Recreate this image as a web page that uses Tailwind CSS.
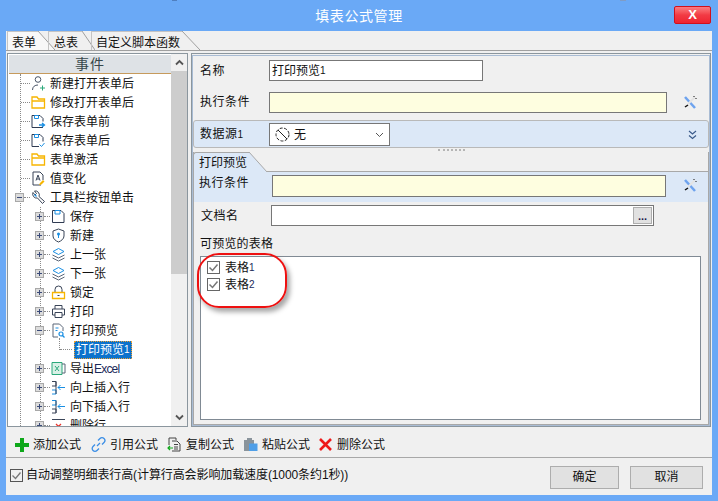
<!DOCTYPE html>
<html>
<head>
<meta charset="utf-8">
<script src="https://cdn.jsdelivr.net/npm/@tailwindcss/browser@4"></script>
</head>
<body class="m-0">
<div class="w-[718px] h-[501px] overflow-hidden bg-[#6aa9f6] flex flex-col font-['Liberation_Sans','Noto_Sans_CJK_SC',sans-serif] text-[12px] leading-[16px] text-[#111]">
  <!-- title -->
  <div class="h-[31px] shrink-0 relative flex items-center justify-center">
    <span class="text-white text-[14px] tracking-[0.6px] mt-[1px]">填表公式管理</span>
    <div class="absolute left-[172px] top-0 w-[5px] h-[1px] bg-[#4f7fc0]"></div>
    <div class="absolute left-[620px] top-0 w-[6px] h-[1px] bg-[#7f9cc6]"></div>
    <div class="absolute left-[674px] top-[6px] w-[37px] h-[18px] rounded-[2px] border border-[#d0101c] bg-gradient-to-b from-[#fb7a80] via-[#f23a44] to-[#ee2330] flex items-center justify-center text-white font-bold text-[13px] font-['Liberation_Sans',sans-serif]">X</div>
  </div>
  <!-- window body -->
  <div class="mx-[6px] mb-[6px] flex-1 bg-[#f0f0f0] flex flex-col min-h-0">
    <!-- tabs -->
    <div class="h-[20px] shrink-0 flex items-stretch border-b border-[#a0a0a0] pl-[1px]">
      <div class="relative w-[31px] bg-[#f8f8f8] border-t border-l border-[#c4c4c4] pl-[4px] pt-[3px] whitespace-nowrap">表单</div>
      <svg class="w-[17px] h-[19px] shrink-0" viewBox="0 0 17 19"><path d="M0 0L17 19H0Z" fill="#f8f8f8"/><path d="M0 0L17 19" stroke="#a0a0a0" fill="none"/></svg>
      <div class="w-[34px] -ml-[7px] border-t border-l border-[#c4c4c4] pl-[5px] pt-[3px] relative whitespace-nowrap">总表</div>
      <svg class="w-[13px] h-[19px] shrink-0" viewBox="0 0 13 19"><path d="M0 0L13 19" stroke="#a0a0a0" fill="none"/></svg>
      <div class="w-[91px] -ml-[4px] border-t border-l border-[#c4c4c4] pl-[4px] pt-[3px] whitespace-nowrap">自定义脚本函数</div>
      <svg class="w-[18px] h-[19px] shrink-0" viewBox="0 0 18 19"><path d="M0 0L18 19" stroke="#a0a0a0" fill="none"/></svg>
    </div>
    <!-- panels -->
    <div class="flex h-[376px] shrink-0 pt-[2px] pl-[1px] pr-[1px] gap-[3px]">
      <!-- left -->
      <div class="w-[181px] shrink-0 border border-[#8b969e] flex bg-white">
        <div class="w-[163px] shrink-0 flex flex-col min-h-0 pl-[1px] pt-[1px]">
          <div class="h-[19px] shrink-0 bg-[#dee2e6] border-b border-[#c69a5c] text-center text-[14px] text-[#37474a] tracking-[1px] leading-[19px]">事件</div>
          <div class="relative flex-1 overflow-hidden -ml-[1px]">
            <div class="absolute left-[12px] top-0 bottom-0 border-l border-dotted border-[#8a8a8a]"></div>
            <div class="absolute left-[32px] top-[133px] bottom-0 border-l border-dotted border-[#8a8a8a]"></div>
            <div class="absolute left-[51px] top-[264px] h-[12px] border-l border-dotted border-[#8a8a8a]"></div>

            <div class="relative h-[19px] flex items-center pl-[13px]"><span class="w-[9px] border-t border-dotted border-[#8a8a8a]"></span>
              <svg class="w-[15px] h-[15px] ml-[1px]" viewBox="0 0 15 15" fill="none"><circle cx="7" cy="3.500" r="2.800" stroke="#4a5568"/><path d="M1.500 14c0-3.500 2.500-5 5.500-5" stroke="#4a5568"/><path d="M11.500 9.500v5M9 12h5" stroke="#2aa87a"/></svg>
              <span class="ml-[4px]">新建打开表单后</span></div>
            <div class="relative h-[19px] flex items-center pl-[13px]"><span class="w-[9px] border-t border-dotted border-[#8a8a8a]"></span>
              <svg class="w-[15px] h-[15px] ml-[1px]" viewBox="0 0 15 15" fill="none"><path d="M1 13V2h5l1.500 2H13.500V13Z M1 6h12.500" stroke="#f7b500" stroke-width="1.300"/></svg>
              <span class="ml-[4px]">修改打开表单后</span></div>
            <div class="relative h-[19px] flex items-center pl-[13px]"><span class="w-[9px] border-t border-dotted border-[#8a8a8a]"></span>
              <svg class="w-[15px] h-[15px] ml-[1px]" viewBox="0 0 15 15" fill="none"><path d="M1 1.500h8l3 3v3M12 13.500H1v-12" stroke="#2f3b52"/><path d="M3.500 1.500h4v3h-4Z" stroke="#1a8fe3"/><path d="M8 11h5M11 9l2.500 2-2.500 2" stroke="#1a8fe3" stroke-width="1.300"/></svg>
              <span class="ml-[4px]">保存表单前</span></div>
            <div class="relative h-[19px] flex items-center pl-[13px]"><span class="w-[9px] border-t border-dotted border-[#8a8a8a]"></span>
              <svg class="w-[15px] h-[15px] ml-[1px]" viewBox="0 0 15 15" fill="none"><path d="M1 1.500h8l3 3v4M8 13.500H1v-12" stroke="#2f3b52"/><path d="M3.500 1.500h4v3h-4Z" stroke="#1a8fe3"/><path d="M8.500 11.500l2 2 3-3.500" stroke="#1a8fe3"/></svg>
              <span class="ml-[4px]">保存表单后</span></div>
            <div class="relative h-[19px] flex items-center pl-[13px]"><span class="w-[9px] border-t border-dotted border-[#8a8a8a]"></span>
              <svg class="w-[15px] h-[15px] ml-[1px]" viewBox="0 0 15 15" fill="none"><path d="M1 13V2h5l1.500 2H13.500V13Z M1 6h12.500" stroke="#f7b500" stroke-width="1.300"/></svg>
              <span class="ml-[4px]">表单激活</span></div>
            <div class="relative h-[19px] flex items-center pl-[13px]"><span class="w-[9px] border-t border-dotted border-[#8a8a8a]"></span>
              <svg class="w-[15px] h-[15px] ml-[1px]" viewBox="0 0 15 15" fill="none"><path d="M10 14H2V1h7l3 3v5" stroke="#3a4558"/><path d="M5 9.500L7 4l2 5.500M5.700 8h2.600" stroke="#3a4558"/><path d="M8 14l1-2 3-3 1.500 1.500-3 3Z" fill="#f7b500"/></svg>
              <span class="ml-[4px]">值变化</span></div>
            <!-- toolbar click -->
            <div class="relative h-[19px] flex items-center pl-[7px]">
              <span class="w-[9px] h-[9px] bg-[#dcdcdc] border border-[#a8a8a8] flex items-center justify-center"><span class="w-[5px] h-[1px] bg-[#3a4a78]"></span></span>
              <span class="w-[6px] border-t border-dotted border-[#8a8a8a]"></span>
              <svg class="w-[15px] h-[15px] ml-[1px]" viewBox="0 0 15 15" fill="none"><path d="M2 2.500a4 4 0 0 0 4.500 5.500l5 5.500 2-2-5.500-5A4 4 0 0 0 3.500 1l2 2.500L4 5Z" stroke="#3a4558"/><path d="M3.500 4.500l2 2" stroke="#1a8fe3" stroke-width="1.200"/></svg>
              <span class="ml-[4px]">工具栏按钮单击</span></div>
            <!-- level 1 -->
            <div class="relative h-[19px] flex items-center pl-[27px]">
              <span class="w-[9px] h-[9px] bg-[#dcdcdc] border border-[#a8a8a8] relative flex items-center justify-center"><span class="w-[5px] h-[1px] bg-[#3a4a78]"></span><span class="absolute w-[1px] h-[5px] bg-[#3a4a78]"></span></span>
              <span class="w-[6px] border-t border-dotted border-[#8a8a8a]"></span>
              <svg class="w-[15px] h-[15px] ml-[1px]" viewBox="0 0 15 15" fill="none"><path d="M1.500 1.500h8.500l3 3v9h-11.500Z" stroke="#2f3b52"/><path d="M4 1.500h5v3.500h-5Z" stroke="#1a8fe3"/></svg>
              <span class="ml-[4px]">保存</span></div>
            <div class="relative h-[19px] flex items-center pl-[27px]">
              <span class="w-[9px] h-[9px] bg-[#dcdcdc] border border-[#a8a8a8] relative flex items-center justify-center"><span class="w-[5px] h-[1px] bg-[#3a4a78]"></span><span class="absolute w-[1px] h-[5px] bg-[#3a4a78]"></span></span>
              <span class="w-[6px] border-t border-dotted border-[#8a8a8a]"></span>
              <svg class="w-[15px] h-[15px] ml-[1px]" viewBox="0 0 15 15" fill="none"><path d="M7.500 1L13 3v5c0 3-3 5-5.500 6C5 13 2 11 2 8V3Z" stroke="#3a4558"/><circle cx="7.500" cy="6" r="1.500" fill="#1a8fe3"/><path d="M7.500 7v3" stroke="#1a8fe3"/></svg>
              <span class="ml-[4px]">新建</span></div>
            <div class="relative h-[19px] flex items-center pl-[27px]">
              <span class="w-[9px] h-[9px] bg-[#dcdcdc] border border-[#a8a8a8] relative flex items-center justify-center"><span class="w-[5px] h-[1px] bg-[#3a4a78]"></span><span class="absolute w-[1px] h-[5px] bg-[#3a4a78]"></span></span>
              <span class="w-[6px] border-t border-dotted border-[#8a8a8a]"></span>
              <svg class="w-[15px] h-[15px] ml-[1px]" viewBox="0 0 15 15" fill="none"><path d="M7.500 1.500l5.500 3-5.500 3-5.500-3Z" stroke="#1a8fe3"/><path d="M1.500 8l6 3 6-3M1.500 11l6 3 6-3" stroke="#5a6678"/></svg>
              <span class="ml-[4px]">上一张</span></div>
            <div class="relative h-[19px] flex items-center pl-[27px]">
              <span class="w-[9px] h-[9px] bg-[#dcdcdc] border border-[#a8a8a8] relative flex items-center justify-center"><span class="w-[5px] h-[1px] bg-[#3a4a78]"></span><span class="absolute w-[1px] h-[5px] bg-[#3a4a78]"></span></span>
              <span class="w-[6px] border-t border-dotted border-[#8a8a8a]"></span>
              <svg class="w-[15px] h-[15px] ml-[1px]" viewBox="0 0 15 15" fill="none"><path d="M7.500 1.500l5.500 3-5.500 3-5.500-3Z" stroke="#1a8fe3"/><path d="M1.500 8l6 3 6-3M1.500 11l6 3 6-3" stroke="#5a6678"/></svg>
              <span class="ml-[4px]">下一张</span></div>
            <div class="relative h-[19px] flex items-center pl-[27px]">
              <span class="w-[9px] h-[9px] bg-[#dcdcdc] border border-[#a8a8a8] relative flex items-center justify-center"><span class="w-[5px] h-[1px] bg-[#3a4a78]"></span><span class="absolute w-[1px] h-[5px] bg-[#3a4a78]"></span></span>
              <span class="w-[6px] border-t border-dotted border-[#8a8a8a]"></span>
              <svg class="w-[15px] h-[15px] ml-[1px]" viewBox="0 0 15 15" fill="none"><path d="M4 7V4.500a3.500 3.500 0 0 1 7 0V7" stroke="#3a4558"/><path d="M1.500 7.500h12v6h-12Z" stroke="#f7b500" stroke-width="1.300"/><path d="M6.500 10.500h2" stroke="#3a4558"/></svg>
              <span class="ml-[4px]">锁定</span></div>
            <div class="relative h-[19px] flex items-center pl-[27px]">
              <span class="w-[9px] h-[9px] bg-[#dcdcdc] border border-[#a8a8a8] relative flex items-center justify-center"><span class="w-[5px] h-[1px] bg-[#3a4a78]"></span><span class="absolute w-[1px] h-[5px] bg-[#3a4a78]"></span></span>
              <span class="w-[6px] border-t border-dotted border-[#8a8a8a]"></span>
              <svg class="w-[15px] h-[15px] ml-[1px]" viewBox="0 0 15 15" fill="none"><path d="M4 5V1.500h7V5M4 11H1.500V5h12v6H11" stroke="#3a4558"/><path d="M4 8.500h7v5H4Z" stroke="#3a4558"/></svg>
              <span class="ml-[4px]">打印</span></div>
            <div class="relative h-[19px] flex items-center pl-[27px]">
              <span class="w-[9px] h-[9px] bg-[#dcdcdc] border border-[#a8a8a8] flex items-center justify-center"><span class="w-[5px] h-[1px] bg-[#3a4a78]"></span></span>
              <span class="w-[6px] border-t border-dotted border-[#8a8a8a]"></span>
              <svg class="w-[15px] h-[15px] ml-[1px]" viewBox="0 0 15 15" fill="none"><path d="M7 14H2V1h6.500L12 4.500V8" stroke="#5a6678"/><path d="M4.500 5h3M4.500 7.500h2" stroke="#1a8fe3"/><circle cx="10" cy="11" r="2" stroke="#1a8fe3" stroke-width="1.200"/><path d="M11.500 12.500l2 2" stroke="#1a8fe3" stroke-width="1.200"/></svg>
              <span class="ml-[4px]">打印预览</span></div>
            <div class="relative h-[19px] flex items-center pl-[52px]">
              <span class="w-[12px] border-t border-dotted border-[#8a8a8a]"></span>
              <span class="ml-[2px] h-[18px] px-[1px] bg-[#0c72cc] border border-dotted border-[#f0a030] text-white flex items-center">打印预览<span class="text-[10px]">1</span></span></div>
            <div class="relative h-[19px] flex items-center pl-[27px]">
              <span class="w-[9px] h-[9px] bg-[#dcdcdc] border border-[#a8a8a8] relative flex items-center justify-center"><span class="w-[5px] h-[1px] bg-[#3a4a78]"></span><span class="absolute w-[1px] h-[5px] bg-[#3a4a78]"></span></span>
              <span class="w-[6px] border-t border-dotted border-[#8a8a8a]"></span>
              <svg class="w-[15px] h-[15px] ml-[1px]" viewBox="0 0 15 15" fill="none"><path d="M1 1.500h10v12H1Z" fill="#d8f0e6" stroke="#2aa87a"/><path d="M4 5l4 5M8 5l-4 5" stroke="#2aa87a"/><path d="M11 3h3v9h-3" stroke="#5a6678"/></svg>
              <span class="ml-[4px]">导出<span class="text-[12px] tracking-[-0.8px] text-[#1a2a5a]">Excel</span></span></div>
            <div class="relative h-[19px] flex items-center pl-[27px]">
              <span class="w-[9px] h-[9px] bg-[#dcdcdc] border border-[#a8a8a8] relative flex items-center justify-center"><span class="w-[5px] h-[1px] bg-[#3a4a78]"></span><span class="absolute w-[1px] h-[5px] bg-[#3a4a78]"></span></span>
              <span class="w-[6px] border-t border-dotted border-[#8a8a8a]"></span>
              <svg class="w-[15px] h-[15px] ml-[1px]" viewBox="0 0 15 15" fill="none"><path d="M1 1.500h4v4.500H1" stroke="#3a4558"/><path d="M1 10h4v4H1" stroke="#1a8fe3"/><path d="M5 1.500v12.500" stroke="#3a4558"/><path d="M14 7.500H7M9.500 5L7 7.500 9.500 10" stroke="#1a8fe3"/></svg>
              <span class="ml-[4px]">向上插入行</span></div>
            <div class="relative h-[19px] flex items-center pl-[27px]">
              <span class="w-[9px] h-[9px] bg-[#dcdcdc] border border-[#a8a8a8] relative flex items-center justify-center"><span class="w-[5px] h-[1px] bg-[#3a4a78]"></span><span class="absolute w-[1px] h-[5px] bg-[#3a4a78]"></span></span>
              <span class="w-[6px] border-t border-dotted border-[#8a8a8a]"></span>
              <svg class="w-[15px] h-[15px] ml-[1px]" viewBox="0 0 15 15" fill="none"><path d="M1 1.500h4v4.500H1" stroke="#1a8fe3"/><path d="M1 10h4v4H1" stroke="#3a4558"/><path d="M5 1.500v12.500" stroke="#3a4558"/><path d="M14 7.500H7M9.500 5L7 7.500 9.500 10" stroke="#1a8fe3"/></svg>
              <span class="ml-[4px]">向下插入行</span></div>
            <div class="relative h-[19px] flex items-center pl-[27px]">
              <span class="w-[9px] h-[9px] bg-[#dcdcdc] border border-[#a8a8a8] relative flex items-center justify-center"><span class="w-[5px] h-[1px] bg-[#3a4a78]"></span><span class="absolute w-[1px] h-[5px] bg-[#3a4a78]"></span></span>
              <span class="w-[6px] border-t border-dotted border-[#8a8a8a]"></span>
              <svg class="w-[15px] h-[15px] ml-[1px]" viewBox="0 0 15 15" fill="none"><path d="M1 1.500h13" stroke="#3a4558"/><path d="M5 6l5 5M10 6l-5 5" stroke="#e8352e" stroke-width="1.300"/></svg>
              <span class="ml-[4px]">删除行</span></div>
          </div>
        </div>
        <!-- scrollbar -->
        <div class="flex-1 bg-[#f0f0f0] flex flex-col items-stretch">
          <div class="h-[17px] shrink-0 flex items-center justify-center"><svg class="w-[9px] h-[7px]" viewBox="0 0 9 7" fill="none"><path d="M1 5.500L4.500 2 8 5.500" stroke="#555" stroke-width="1.800"/></svg></div>
          <div class="h-[203px] shrink-0 bg-[#cdcdcd]"></div>
          <div class="flex-1"></div>
          <div class="h-[17px] shrink-0 flex items-center justify-center"><svg class="w-[9px] h-[7px]" viewBox="0 0 9 7" fill="none"><path d="M1 1.500L4.500 5 8 1.500" stroke="#555" stroke-width="1.800"/></svg></div>
        </div>
      </div>
      <!-- right -->
      <div class="flex-1 border border-[#8b969e] pt-[1px] min-w-0">
        <div class="h-full border border-[#a9bcd4] flex flex-col pt-[4px] relative">
          <div class="h-[21px] shrink-0 flex items-center pl-[7px]">
            <span class="w-[69px] text-[12px] tracking-[0.5px]">名称</span>
            <div class="w-[214px] h-[21px] bg-white border border-[#777] flex items-center pl-[2px]">打印预览<span class="text-[10px]">1</span></div>
          </div>
          <div class="h-[21px] mt-[11px] shrink-0 flex items-center pl-[7px]">
            <span class="w-[69px] tracking-[0.5px] -mt-[2px]">执行条件</span>
            <div class="w-[398px] h-[21px] bg-[#fefee0] border border-[#777]"></div>
            <svg class="w-[15px] h-[15px] ml-[16px]" viewBox="0 0 15 15" fill="none"><path d="M2 2l10 11" stroke="#6ea3ee" stroke-width="2.500"/><path d="M12 2L5 9" stroke="#e4e4e4" stroke-width="2"/><path d="M2 12l3-2" stroke="#111" stroke-width="1.500"/><path d="M10.500 1.500h1M13 3v1" stroke="#111"/></svg>
          </div>
          <div class="mt-[7px] h-[28px] shrink-0 bg-[#dce8f7] border border-[#b9b9b9] rounded-[3px] flex items-center pl-[6px] pt-[1px]">
            <span class="w-[69px] tracking-[0.5px]">数据源<span class="text-[10px]">1</span></span>
            <div class="w-[121px] h-[23px] bg-white border border-[#777] flex items-center pl-[5px] pr-[3px]">
              <svg class="w-[15px] h-[15px]" viewBox="0 0 15 15" fill="none"><circle cx="7.500" cy="7.500" r="6.500" stroke="#222" stroke-dasharray="3 1.500"/><path d="M3 3l9 9" stroke="#222"/></svg>
              <span class="ml-[4px] flex-1">无</span>
              <svg class="w-[9px] h-[6px] mr-[2px]" viewBox="0 0 9 6" fill="none"><path d="M1 1l3.500 3.500L8 1" stroke="#555"/></svg>
            </div>
            <svg class="w-[9px] h-[10px] ml-auto mr-[11px]" viewBox="0 0 9 10" fill="none"><path d="M1 1l3.500 3L8 1M1 5.500l3.500 3 3.500-3" stroke="#3a5a8a" stroke-width="1.200"/></svg>
          </div>
          <div class="h-[4px] shrink-0 flex justify-center items-center"><div class="w-[27px] border-t-2 border-dotted border-[#b5b5b5]"></div></div>
          <!-- inner tab page -->
          <div class="flex-1 min-h-0 flex flex-col border-r border-b border-l border-[#a8a8a8] relative">
            <div class="h-[20px] shrink-0 flex items-stretch -ml-[1px]">
              <div class="w-[56px] bg-[#dce8f7] border-t border-l border-[#a8a8a8] rounded-tl-[3px] pl-[5px] pt-[2px] whitespace-nowrap">打印预览</div>
              <svg class="w-[18px] h-[20px] shrink-0" viewBox="0 0 18 20"><path d="M0 0L18 20H0Z" fill="#dce8f7"/><path d="M0 0L18 20" stroke="#a8a8a8" fill="none"/></svg>
              <div class="flex-1 border-t border-[#a8a8a8] mt-[19px]"></div>
            </div>
            <div class="h-[30px] shrink-0 bg-[#dce8f7] flex items-start pt-[3px] pl-[5px]">
              <span class="w-[73px] tracking-[0.5px]">执行条件</span>
              <div class="w-[394px] h-[22px] bg-[#fefee0] border border-[#777]"></div>
              <svg class="w-[15px] h-[15px] ml-[17px] mt-[3px]" viewBox="0 0 15 15" fill="none"><path d="M2 2l10 11" stroke="#6ea3ee" stroke-width="2.500"/><path d="M12 2L5 9" stroke="#e4e4e4" stroke-width="2"/><path d="M2 12l3-2" stroke="#111" stroke-width="1.500"/><path d="M10.500 1.500h1M13 3v1" stroke="#111"/></svg>
            </div>
            <div class="h-[21px] mt-[3px] shrink-0 flex items-center pl-[7px]">
              <span class="w-[70px] tracking-[0.5px]">文档名</span>
              <div class="w-[383px] h-[21px] bg-white border border-[#777] flex items-center justify-end pr-[1px]">
                <div class="w-[19px] h-[17px] bg-[#e1e1e1] border border-[#adadad] flex justify-center items-end pb-[1px] text-[11px] leading-[11px] font-bold text-[#1a1a4a]">...</div>
              </div>
            </div>
            <div class="mt-[10px] pl-[6px] tracking-[0.2px] h-[16px] shrink-0">可预览的表格</div>
            <div class="mt-[4px] ml-[6px] mr-[7px] mb-[4px] flex-1 bg-white border border-[#808a94] pl-[6px] pt-[2px]">
              <div class="h-[17px] flex items-center gap-[5px]"><span class="w-[13px] h-[13px] border border-[#666] flex items-center justify-center"><svg class="w-[11px] h-[11px]" viewBox="0 0 11 11" fill="none"><path d="M1.500 5.500l3 3 5-6" stroke="#777" stroke-width="1.500"/></svg></span>表格<span class="-ml-[5px] text-[10px] text-[#1a2a5a]">1</span></div>
              <div class="h-[17px] flex items-center gap-[5px]"><span class="w-[13px] h-[13px] border border-[#666] flex items-center justify-center"><svg class="w-[11px] h-[11px]" viewBox="0 0 11 11" fill="none"><path d="M1.500 5.500l3 3 5-6" stroke="#777" stroke-width="1.500"/></svg></span>表格<span class="-ml-[5px] text-[10px] text-[#1a2a5a]">2</span></div>
            </div>
            <!-- red annotation -->
            <div class="absolute left-[3px] top-[101px] w-[90px] h-[55px] rounded-[22px] border-2 border-[#ee1010] shadow-[3px_4px_5px_rgba(0,0,0,0.35)]"></div>
          </div>
        </div>
      </div>
    </div>
    <!-- toolbar -->
    <div class="h-[31px] shrink-0 flex items-center pl-[9px] pt-[5px] border-b border-[#a8a8a8]">
      <svg class="w-[14px] h-[14px]" viewBox="0 0 14 14"><path d="M5 0h4v5h5v4H9v5H5V9H0V5h5Z" fill="#0ea81a"/></svg>
      <span class="ml-[4px]">添加公式</span>
      <svg class="w-[15px] h-[15px] ml-[10px]" viewBox="0 0 15 15" fill="none"><path d="M6 9l3-3M7 3.500l2-2a2.500 2.500 0 0 1 4 4l-2 2M8 11.500l-2 2a2.500 2.500 0 0 1-4-4l2-2" stroke="#3b8ee6" stroke-width="1.300"/></svg>
      <span class="ml-[4px]">引用公式</span>
      <svg class="w-[15px] h-[15px] ml-[9px]" viewBox="0 0 15 15" fill="none"><path d="M2 8V1h7v2" stroke="#444"/><path d="M5 4h5l3 3v7H5" stroke="#444"/><path d="M7 7.500h4M7 10h4M7 12h4" stroke="#444"/><path d="M1 11h5M3 9l-2 2 2 2" stroke="#0ea81a" stroke-width="1.200"/></svg>
      <span class="ml-[4px]">复制公式</span>
      <svg class="w-[15px] h-[15px] ml-[9px]" viewBox="0 0 15 15"><path d="M1 3h3V1h5v2h2v4H6v7H1Z" fill="#8a949c"/><path d="M6 6.500h8.500V14H6Z" fill="#4f9fe8"/></svg>
      <span class="ml-[4px]">粘贴公式</span>
      <svg class="w-[13px] h-[13px] ml-[9px]" viewBox="0 0 13 13"><path d="M1 1l11 11M12 1L1 12" stroke="#ee1a1a" stroke-width="2.600"/></svg>
      <span class="ml-[5px]">删除公式</span>
    </div>
    <!-- footer -->
    <div class="flex-1 flex items-center pl-[4px] pr-[9px]">
      <span class="w-[13px] h-[13px] border border-[#555] flex items-center justify-center shrink-0 -mt-[3px]"><svg class="w-[11px] h-[11px]" viewBox="0 0 11 11" fill="none"><path d="M1.500 5.500l3 3 5-6" stroke="#777" stroke-width="1.300"/></svg></span>
      <span class="ml-[3px] -mt-[3px] text-[12px] tracking-[-0.1px]">自动调整明细表行高(计算行高会影响加载速度(1000条约1秒))</span>
      <div class="ml-auto flex gap-[11px] mt-[1px]">
        <div class="w-[69px] h-[23px] bg-[#e1e1e1] border border-[#adadad] flex items-center justify-center">确定</div>
        <div class="w-[73px] h-[23px] bg-[#e1e1e1] border border-[#adadad] flex items-center justify-center">取消</div>
      </div>
    </div>
  </div>
</div>
</body>
</html>
